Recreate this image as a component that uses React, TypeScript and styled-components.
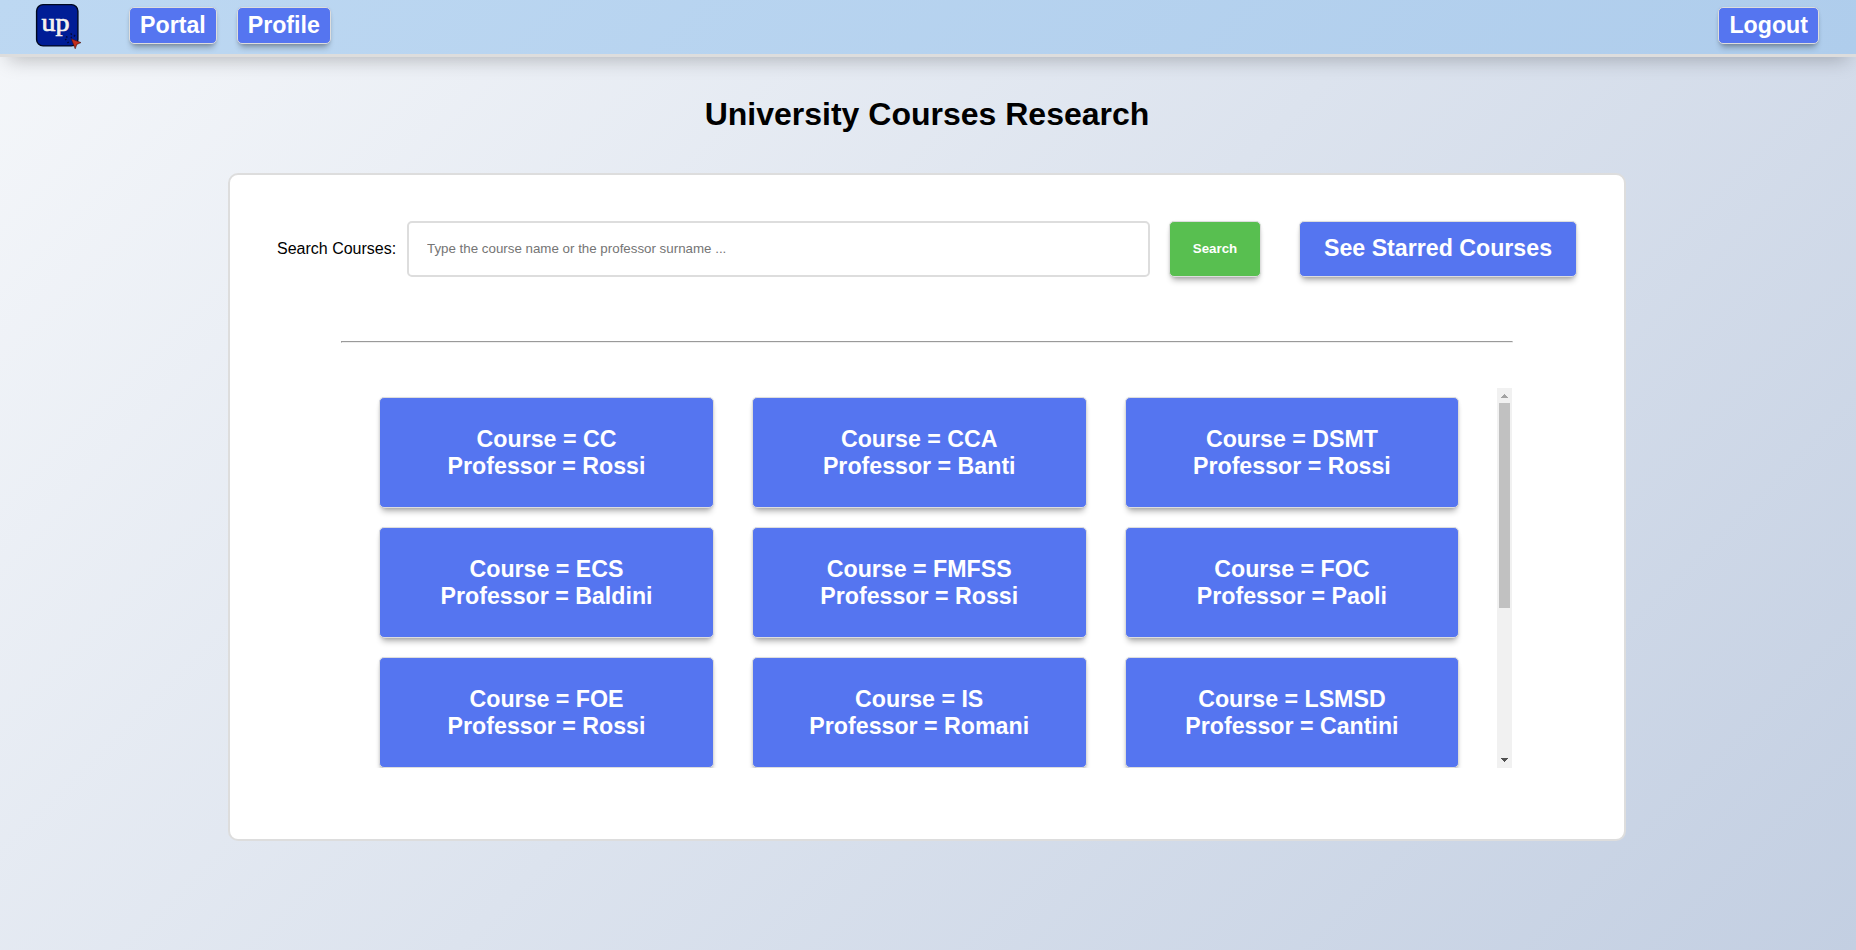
import React from "react";
import styled, { createGlobalStyle } from "styled-components";

const GlobalStyle = createGlobalStyle`
  *, *::before, *::after { box-sizing: border-box; }
  html { height: 100%; }
  body {
    margin: 0;
    min-height: 100vh;
    overflow: hidden;
    font-family: "Liberation Sans", Arial, sans-serif;
    font-size: 16px;
    color: #000;
    background: linear-gradient(135deg, #f5f7fa 0%, #c3cfe2 100%) no-repeat;
  }
`;

const NavBar = styled.nav`
  display: flex;
  align-items: flex-start;
  height: 57px;
  padding: 0 37px 0 35px;
  border-bottom: 3px solid #ddd;
  background: linear-gradient(135deg, #bdd8f2 0%, #afcdec 100%);
  box-shadow: 0 10px 20px -8px rgba(0, 0, 0, 0.26);
`;

const Logo = styled.svg`
  width: 47px;
  height: 46px;
  margin: 3px 47px 0 0;
`;

const ActionButton = styled.button<{ $tone?: "blue" | "green" }>`
  border: 1px solid #ddd;
  border-radius: 5px;
  margin: 0;
  color: #fff;
  background: ${(p) => (p.$tone === "green" ? "#58bf50" : "#5575f0")};
  font-family: inherit;
  font-size: 23.2px;
  font-weight: bold;
  line-height: 27px;
  text-align: center;
  box-shadow: 0 6px 6px -3px rgba(0, 0, 0, 0.32), 0 1px 3px rgba(0, 0, 0, 0.1);
`;

const NavButton = styled(ActionButton)`
  height: 37px;
  margin: 7px 20px 0 0;
  padding: 4px 10px;

  &:last-child {
    margin: 7px 0 0 auto;
  }
`;

const Title = styled.h1`
  margin: 39px 0 40px;
  padding-right: 2px;
  font-size: 32px;
  line-height: 37px;
  text-align: center;
`;

const Panel = styled.main`
  width: 1398px;
  height: 668px;
  margin: 0 auto 0 228px;
  padding: 46px 47px 0;
  border: 2px solid #ddd;
  border-radius: 10px;
  background: #fff;
`;

const SearchRow = styled.form`
  display: flex;
  align-items: center;
  height: 56px;
`;

const SearchLabel = styled.label`
  flex: none;
  width: 130px;
  white-space: nowrap;
`;

const SearchInput = styled.input`
  flex: none;
  width: 743px;
  height: 56px;
  padding: 0 18px 2px;
  border: 2px solid #ddd;
  border-radius: 5px;
  background: #fff;
  font-family: inherit;
  font-size: 13.333px;

  &::placeholder {
    color: #757575;
  }
`;

const SearchButton = styled(ActionButton)`
  flex: none;
  width: 92px;
  height: 56px;
  margin-left: 19px;
  padding: 0 0 2px;
  font-size: 13.333px;
`;

const StarredButton = styled(ActionButton)`
  flex: none;
  width: 278px;
  height: 56px;
  margin-left: 38px;
  padding: 0 0 1px;
`;

const Divider = styled.hr`
  width: 1172px;
  margin: 64px 0 45px 64px;
  border: 1px solid;
  border-color: #9a9a9a #eee #eee #9a9a9a;
`;

const Results = styled.section`
  display: flex;
  justify-content: space-between;
  width: 1171px;
  height: 380px;
  margin-left: 64px;
  overflow: hidden;
`;

const CourseGrid = styled.div`
  display: grid;
  grid-template-columns: repeat(3, 334.7px);
  grid-auto-rows: 111px;
  gap: 19px 38px;
  padding: 9px 0 0 38.2px;
`;

const CourseCard = styled(ActionButton)`
  padding: 0;
`;

const ScrollTrack = styled.div`
  display: flex;
  flex: none;
  flex-direction: column;
  align-items: center;
  width: 15px;
  height: 380px;
  background: #f1f1f1;
`;

const ScrollArrow = styled.svg`
  width: 15px;
  height: 15px;
  flex: none;

  &:last-child {
    margin-top: auto;
  }
`;

const ScrollThumb = styled.div`
  width: 11px;
  height: 205px;
  background: #c1c1c1;
`;

const courses = [
  ["CC", "Rossi"],
  ["CCA", "Banti"],
  ["DSMT", "Rossi"],
  ["ECS", "Baldini"],
  ["FMFSS", "Rossi"],
  ["FOC", "Paoli"],
  ["FOE", "Rossi"],
  ["IS", "Romani"],
  ["LSMSD", "Cantini"],
];

export default function App() {
  return (
    <>
      <GlobalStyle />
      <NavBar>
        <Logo viewBox="0 0 47 46" aria-label="up">
          <rect x="1.6" y="1.6" width="41.3" height="41.3" rx="6.5" fill="#001d96" stroke="#000820" strokeWidth="1.4" />
          <text
            x="6.6"
            y="28"
            fill="#f4f1ee"
            stroke="#f4f1ee"
            strokeWidth="0.7"
            fontFamily="Liberation Serif, serif"
            fontSize="25.5"
            textLength="28"
            lengthAdjust="spacingAndGlyphs"
          >
            up
          </text>
          <g stroke="#000a3c" strokeWidth="1.4">
            <path d="M35.7 30.3l1 1.5M31 33.6l1.5.8M30 36.8l1.5-.8M32.3 40l1.5-1M40 32l-1 1.5M35.8 34l1 .8" />
          </g>
          <path d="M36.2 35.8l9.8 3.8-4.2 1.8-1.6 4.4z" fill="#c42d1c" stroke="#46100c" strokeWidth="0.6" />
        </Logo>
        <NavButton>Portal</NavButton>
        <NavButton>Profile</NavButton>
        <NavButton>Logout</NavButton>
      </NavBar>
      <Title>University Courses Research</Title>
      <Panel>
        <SearchRow onSubmit={(e) => e.preventDefault()}>
          <SearchLabel htmlFor="search">Search Courses:</SearchLabel>
          <SearchInput id="search" placeholder="Type the course name or the professor surname ..." />
          <SearchButton $tone="green">Search</SearchButton>
          <StarredButton type="button">See Starred Courses</StarredButton>
        </SearchRow>
        <Divider />
        <Results>
          <CourseGrid>
            {courses.map(([course, professor]) => (
              <CourseCard key={course}>
                Course = {course}
                <br />
                Professor = {professor}
              </CourseCard>
            ))}
          </CourseGrid>
          <ScrollTrack>
            <ScrollArrow viewBox="0 0 15 15" shapeRendering="crispEdges">
              <path d="M4 10h7v-1h-1v-1h-1v-1h-1v-1h-1v1h-1v1h-1v1h-1z" fill="#a3a3a3" />
            </ScrollArrow>
            <ScrollThumb />
            <ScrollArrow viewBox="0 0 15 15" shapeRendering="crispEdges">
              <path d="M4 5h7v1h-1v1h-1v1h-1v1h-1v-1h-1v-1h-1v-1h-1z" fill="#505050" />
            </ScrollArrow>
          </ScrollTrack>
        </Results>
      </Panel>
    </>
  );
}
